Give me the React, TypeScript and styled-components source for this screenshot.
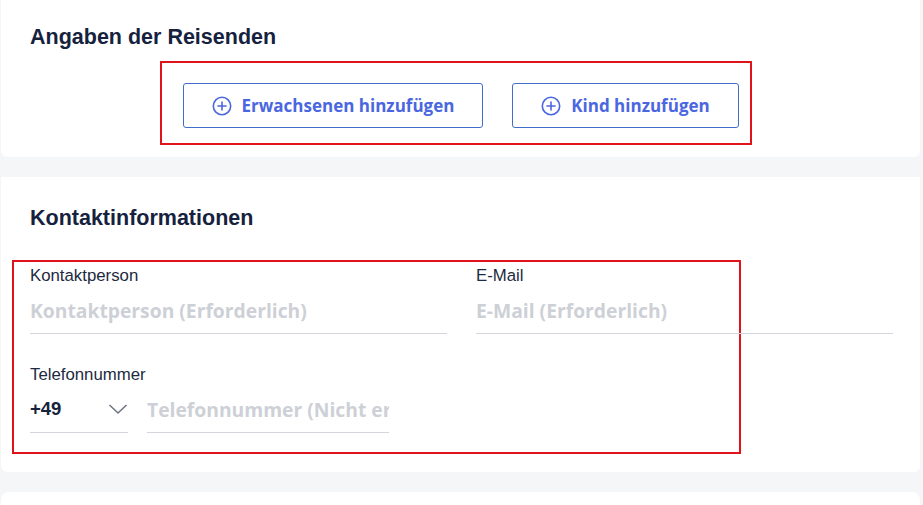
import React from "react";
import styled, { createGlobalStyle } from "styled-components";

const Global = createGlobalStyle`
  html, body { margin: 0; padding: 0; background: #f5f6f8; }
  body { font-family: "Liberation Sans", Arial, sans-serif; color: #1a2540; }
  * { box-sizing: border-box; }
`;

const Page = styled.div`
  display: flex;
  flex-direction: column;
  gap: 20px;
  padding: 0 3px 0 1px;
  width: 923px;
  height: 505px;
  overflow: hidden;
`;

const Card = styled.section<{ $h?: number; $pt?: number }>`
  background: #ffffff;
  border-radius: 0 0 6px 6px;
  padding: ${(p) => p.$pt ?? 28}px 29px 0 29px;
  height: ${(p) => (p.$h ? `${p.$h}px` : "auto")};
  flex-shrink: 0;
`;

const LastCard = styled(Card)`
  border-radius: 8px 8px 0 0;
  height: 40px;
`;

const Title = styled.h2`
  margin: 0;
  font-family: "Liberation Sans", Arial, sans-serif;
  font-weight: 700;
  font-size: 21.5px;
  line-height: 24px;
  color: #16223d;
`;

const ButtonGroup = styled.div`
  margin: 12px 0 0 130px;
  width: 592px;
  height: 84px;
  border: 2px solid #e0131a;
  display: flex;
  gap: 29px;
  padding: 20px 11px 0 21px;
`;

const AddButton = styled.button<{ $w: number }>`
  width: ${(p) => p.$w}px;
  height: 45px;
  border: 1px solid #3f6dc9;
  border-radius: 3px;
  background: #fff;
  display: flex;
  align-items: center;
  justify-content: center;
  gap: 10px;
  font-family: "Open Sans", "Noto Sans", sans-serif;
  font-weight: 700;
  font-size: 17px;
  color: #4a66e0;
  padding: 0;
  cursor: pointer;
`;

const PlusIcon = () => (
  <svg width="20" height="20" viewBox="0 0 20 20" fill="none">
    <circle cx="10" cy="10" r="8.7" stroke="#4a66e0" strokeWidth="1.6" />
    <path d="M10 5.4v9.2M5.4 10h9.2" stroke="#4a66e0" strokeWidth="1.6" />
  </svg>
);

const FormBox = styled.div`
  margin: 30px 0 0 -18px;
  width: 729px;
  height: 194px;
  border: 2px solid #e0131a;
  padding: 4px 0 0 16px;
`;

const Row = styled.div`
  display: grid;
  grid-template-columns: 417px 417px;
  column-gap: 29px;
  width: 863px;
`;

const Field = styled.div`
  display: flex;
  flex-direction: column;
`;

const Label = styled.label`
  font-family: "Liberation Sans", Arial, sans-serif;
  font-size: 16.8px;
  line-height: 20px;
  color: #1d2a40;
`;

const TextInput = styled.input<{ $w?: number }>`
  width: ${(p) => (p.$w ? `${p.$w}px` : "100%")};
  height: 41px;
  margin-top: 7px;
  border: none;
  border-bottom: 1px solid #d3d6dc;
  outline: none;
  background: transparent;
  padding: 0 0 5px 0;
  font-family: "Open Sans", "Noto Sans", sans-serif;
  font-weight: 700;
  font-size: 19.3px;
  color: #1a2540;
  &::placeholder { color: #cdd0d6; }
`;

const PhoneField = styled(Field)`
  margin-top: 31px;
`;

const PhoneRow = styled.div`
  display: flex;
  align-items: flex-end;
  gap: 19px;
`;

const CodeSelect = styled.div`
  width: 98px;
  height: 41px;
  margin-top: 7px;
  border-bottom: 1px solid #d3d6dc;
  display: flex;
  align-items: center;
  justify-content: space-between;
  padding-bottom: 6px;
  font-family: "Liberation Sans", Arial, sans-serif;
  font-weight: 700;
  font-size: 18.5px;
  color: #16223d;
`;

const Chevron = () => (
  <svg width="20" height="12" viewBox="0 0 20 12" fill="none">
    <path d="M1.5 2l8.5 8 8.5-8" stroke="#6b7382" strokeWidth="1.5" />
  </svg>
);

export default function App() {
  return (
    <>
      <Global />
      <Page>
        <Card $h={157} $pt={25}>
          <Title>Angaben der Reisenden</Title>
          <ButtonGroup>
            <AddButton $w={300}>
              <PlusIcon />
              Erwachsenen hinzufügen
            </AddButton>
            <AddButton $w={227}>
              <PlusIcon />
              Kind hinzufügen
            </AddButton>
          </ButtonGroup>
        </Card>
        <Card $h={295} $pt={29}>
          <Title>Kontaktinformationen</Title>
          <FormBox>
            <Row>
              <Field>
                <Label>Kontaktperson</Label>
                <TextInput placeholder="Kontaktperson (Erforderlich)" />
              </Field>
              <Field>
                <Label>E-Mail</Label>
                <TextInput placeholder="E-Mail (Erforderlich)" />
              </Field>
            </Row>
            <PhoneField>
              <Label>Telefonnummer</Label>
              <PhoneRow>
                <CodeSelect>
                  +49
                  <Chevron />
                </CodeSelect>
                <TextInput $w={242} placeholder="Telefonnummer (Nicht erforderlich)" />
              </PhoneRow>
            </PhoneField>
          </FormBox>
        </Card>
        <LastCard />
      </Page>
    </>
  );
}
